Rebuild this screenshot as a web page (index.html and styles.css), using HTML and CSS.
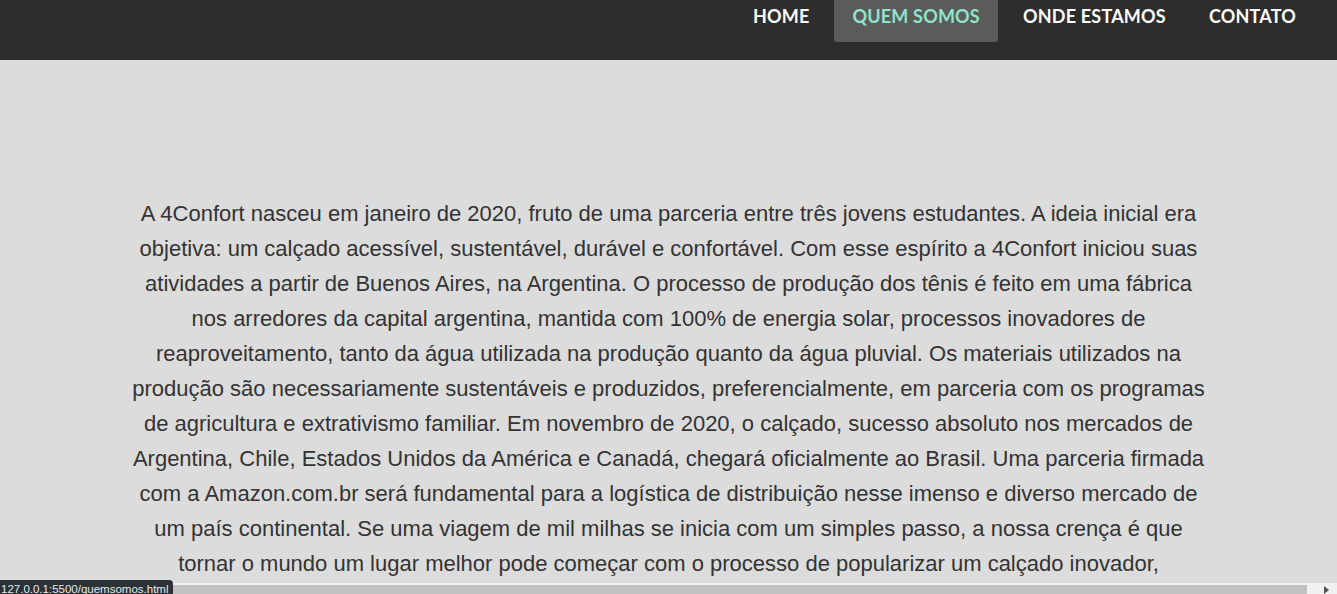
FILE: index.html
```html
<!DOCTYPE html>
<html lang="pt-BR">
<head>
<meta charset="utf-8">
<title>Quem Somos - 4Confort</title>
<link rel="stylesheet" href="styles.css">
</head>
<body>
<header class="topbar">
  <nav class="menu">
    <a class="menu-item" href="#">HOME</a>
    <a class="menu-item active" href="#">QUEM SOMOS</a>
    <a class="menu-item" href="#">ONDE ESTAMOS</a>
    <a class="menu-item" href="#">CONTATO</a>
  </nav>
</header>
<main class="content">
  <p class="about">A 4Confort nasceu em janeiro de 2020, fruto de uma parceria entre três jovens estudantes. A ideia inicial era objetiva: um calçado acessível, sustentável, durável e confortável. Com esse espírito a 4Confort iniciou suas atividades a partir de Buenos Aires, na Argentina. O processo de produção dos tênis é feito em uma fábrica nos arredores da capital argentina, mantida com 100% de energia solar, processos inovadores de reaproveitamento, tanto da água utilizada na produção quanto da água pluvial. Os materiais utilizados na produção são necessariamente sustentáveis e produzidos, preferencialmente, em parceria com os programas de agricultura e extrativismo familiar. Em novembro de 2020, o calçado, sucesso absoluto nos mercados de Argentina, Chile, Estados Unidos da América e Canadá, chegará oficialmente ao Brasil. Uma parceria firmada com a Amazon.com.br será fundamental para a logística de distribuição nesse imenso e diverso mercado de um país continental. Se uma viagem de mil milhas se inicia com um simples passo, a nossa crença é que tornar o mundo um lugar melhor pode começar com o processo de popularizar um calçado inovador, sustentável e confortável.</p>
</main>
<div class="hscroll">
  <div class="hscroll-thumb"></div>
  <div class="hscroll-track"><span class="hscroll-arrow"></span></div>
</div>
<div class="status">127.0.0.1:5500/quemsomos.html</div>
</body>
</html>
```
FILE: styles.css
```css
html, body {
  margin: 0;
  padding: 0;
  height: 100%;
  overflow: hidden;
}
body {
  background: #dcdcdc;
  font-family: "Liberation Sans", Arial, sans-serif;
}
.topbar {
  background: #2d2d2d;
  height: 60px;
  display: flex;
  justify-content: flex-end;
  align-items: flex-start;
  padding-right: 23px;
}
.menu {
  display: flex;
  gap: 7px;
}
.menu-item {
  display: block;
  height: 42px;
  box-sizing: border-box;
  padding: 4px 18px 0;
  color: #ffffff;
  text-decoration: none;
  font-family: "Lato", "Open Sans", sans-serif;
  font-weight: 700;
  font-size: 18px;
  letter-spacing: 0.2px;
  line-height: 24px;
  border-radius: 0 0 3px 3px;
}
.menu-item.active {
  background: #5b5b5b;
  color: #8fe4cc;
}
.content {
  padding-top: 136px;
}
.about {
  width: 1075px;
  margin: 0 auto;
  text-align: center;
  color: #333333;
  font-size: 22px;
  line-height: 35px;
}
.hscroll {
  position: fixed;
  left: 0;
  right: 0;
  bottom: 0;
  height: 9px;
  display: flex;
  border-top: 2px solid #f1f1f1;
  background: #f1f1f1;
}
.hscroll-thumb {
  width: 1307px;
  background: #c1c1c1;
}
.hscroll-track {
  flex: 1;
  position: relative;
}
.hscroll-arrow {
  position: absolute;
  right: 8px;
  top: 1px;
  width: 0;
  height: 0;
  border-left: 5px solid #505050;
  border-top: 4px solid transparent;
  border-bottom: 4px solid transparent;
}
.status {
  position: fixed;
  left: 0;
  bottom: 0;
  height: 14px;
  padding: 0 4px 0 1px;
  background: #2b3135;
  color: #e8eaed;
  font-family: "Liberation Sans", Arial, sans-serif;
  font-size: 11.5px;
  line-height: 18px;
  border-top-right-radius: 4px;
  overflow: hidden;
}
```
